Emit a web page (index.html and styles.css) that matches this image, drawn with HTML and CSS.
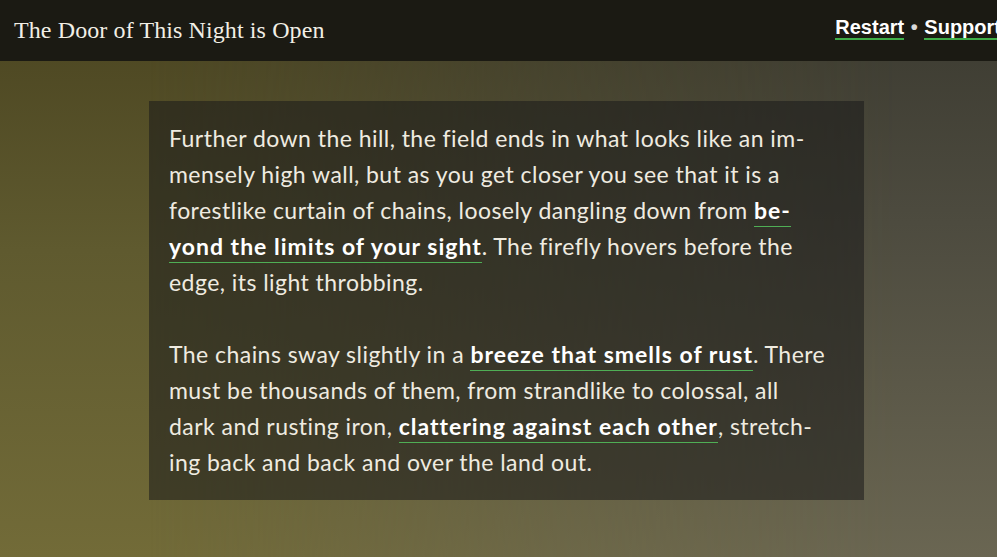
FILE: index.html
```html
<!DOCTYPE html>
<html lang="en">
<head>
<meta charset="utf-8">
<title>The Door of This Night is Open</title>
<link rel="stylesheet" href="styles.css">
</head>
<body>
<header class="topbar">
  <h1 class="title">The Door of This Night is Open</h1>
  <nav class="nav"><a class="nav-link" href="#">Restart</a> <span class="sep">•</span> <a class="nav-link" href="#">Support</a></nav>
</header>
<main class="stage">
  <article class="passage">
    <p>Further down the hill, the field ends in what looks like an im-<br>mensely high wall, but as you get closer you see that it is a<br>forestlike curtain of chains, loosely dangling down from <a class="link" href="#">be-<br>yond the limits of your sight</a>. The firefly hovers before the<br>edge, its light throbbing.</p>
    <p>The chains sway slightly in a <a class="link" href="#">breeze that smells of rust</a>. There<br>must be thousands of them, from strandlike to colossal, all<br>dark and rusting iron, <a class="link" href="#">clattering against each other</a>, stretch-<br>ing back and back and over the land out.</p>
  </article>
</main>
</body>
</html>
```
FILE: styles.css
```css
html, body {
  margin: 0;
  padding: 0;
  height: 100%;
}
body {
  overflow: hidden;
  position: relative;
  background: linear-gradient(to bottom, #4a4420 0%, #5f5a2f 45%, #726b38 100%);
  font-family: Lato, "Open Sans", sans-serif;
}
body::before {
  content: "";
  position: absolute;
  inset: 0;
  background: linear-gradient(to bottom, #3b3a30 0%, #4d4b3f 40%, #6a6652 100%);
  -webkit-mask-image: linear-gradient(to right, transparent 15%, rgba(0,0,0,0.6) 55%, #000 90%);
  mask-image: linear-gradient(to right, transparent 15%, rgba(0,0,0,0.6) 55%, #000 90%);
  pointer-events: none;
}
.topbar {
  position: relative;
  z-index: 1;
  display: flex;
  align-items: center;
  height: 61px;
  padding-left: 14px;
  background: #1b1a13;
  white-space: nowrap;
}
.title {
  margin: 0;
  font-family: "Liberation Serif", serif;
  font-weight: normal;
  font-size: 24px;
  color: #f2efe6;
  letter-spacing: 0.1px;
}
.nav {
  margin-left: auto;
  margin-right: -4px;
  padding-bottom: 8px;
  font-family: "Liberation Sans", Arial, sans-serif;
  font-weight: bold;
  font-size: 20px;
  line-height: 1;
  color: #ffffff;
  word-spacing: 1px;
}
.nav-link {
  color: #ffffff;
  text-decoration: none;
  border-bottom: 2px solid #3fae49;
}
.sep {
  font-size: 20px;
  color: #d8d8d8;
}
.stage {
  position: relative;
  z-index: 1;
  padding-top: 40px;
  padding-left: 149px;
}
.passage {
  width: 675px;
  padding: 19px 20px 20px;
  background: rgba(25, 25, 25, 0.55);
  color: #efebe0;
  font-size: 23px;
  line-height: 36px;
  letter-spacing: 0.45px;
  white-space: nowrap;
}
.passage p {
  margin: 0;
}
.passage p + p {
  margin-top: 36px;
}
.link {
  color: #ffffff;
  font-weight: bold;
  letter-spacing: 1px;
  text-decoration: none;
  border-bottom: 1px solid #4fae55;
  padding-bottom: 2px;
}
```
